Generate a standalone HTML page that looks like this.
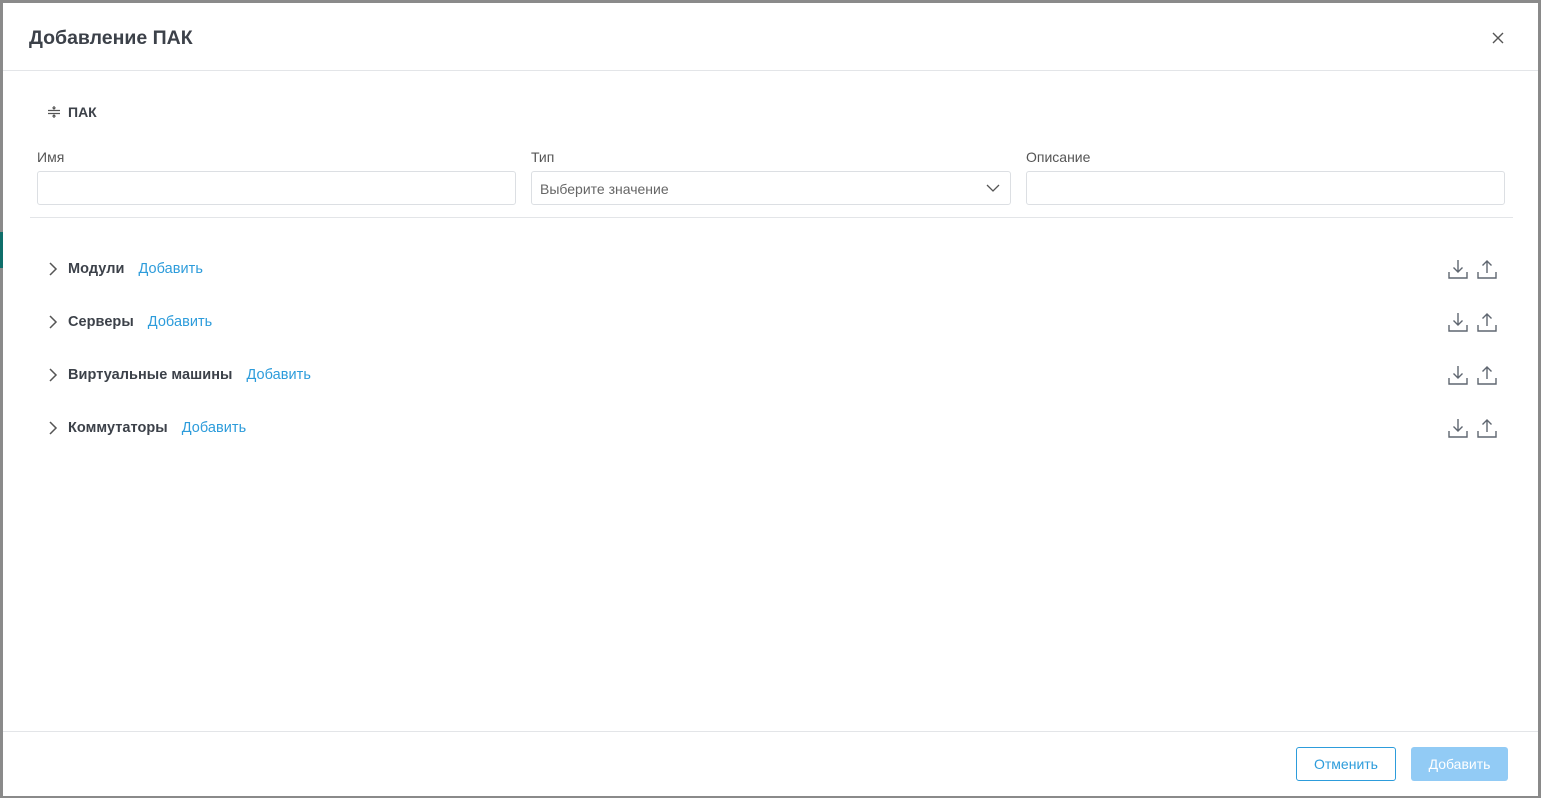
<!DOCTYPE html>
<html><head><meta charset="utf-8">
<style>
*{box-sizing:border-box;margin:0;padding:0}
body{width:1541px;height:798px;background:#8a8a8a;font-family:"Liberation Sans",sans-serif;position:relative;overflow:hidden;color:#3c4149}
.teal{position:absolute;left:0;top:232px;width:4px;height:36px;background:#0f6e6a}
.modal{position:absolute;left:3px;top:3px;width:1535px;height:793px;background:#fff}
.title{position:absolute;left:26px;top:24px;font-size:19.5px;font-weight:bold;color:#3c4149}
.close{position:absolute;left:1488px;top:28px}
.hr{position:absolute;height:1px;background:#e3e5e8}
.sec{position:absolute;left:43px;top:101px;font-size:14px;font-weight:bold;display:flex;align-items:center;gap:6px}
.lbl{position:absolute;top:146px;font-size:14px;color:#555}
.inp{position:absolute;top:168px;height:34px;border:1px solid #dcdfe3;border-radius:3px;font-size:14px;color:#666;padding:9px 8px}
.row{position:absolute;left:45px;display:flex;align-items:center;font-size:14.5px;letter-spacing:0.05px}
.row b{margin-left:10px;color:#3c4149}
.row a{color:#2d9cdb;margin-left:14px;text-decoration:none}
.ic{position:absolute;left:1443px}
.btn{position:absolute;top:744px;height:34px;border-radius:3px;font-size:14px;display:flex;align-items:center;justify-content:center}
</style></head><body>
<div class="teal"></div>
<div class="modal">
<div class="title">Добавление ПАК</div>
<svg class="close" width="14" height="14" viewBox="0 0 14 14"><path d="M2 2L12 12M12 2L2 12" stroke="#555" stroke-width="1.4"/></svg>
<div class="hr" style="left:0;top:67px;width:1535px"></div>
<div class="sec"><svg width="16" height="16" viewBox="0 0 16 16"><path d="M2 6.5H14M2 9.5H14M8 2V5M8 11V14M6.5 3.5L8 5L9.5 3.5M6.5 12.5L8 11L9.5 12.5" stroke="#555" stroke-width="1.2" fill="none"/></svg>ПАК</div>
<div class="lbl" style="left:34px">Имя</div>
<div class="lbl" style="left:528px">Тип</div>
<div class="lbl" style="left:1023px">Описание</div>
<div class="inp" style="left:34px;width:479px"></div>
<div class="inp" style="left:528px;width:480px">Выберите значение<svg style="position:absolute;right:10px;top:11px" width="14" height="10" viewBox="0 0 14 10"><path d="M1 2L7 8L13 2" stroke="#555" stroke-width="1.3" fill="none"/></svg></div>
<div class="inp" style="left:1023px;width:479px"></div>
<div class="hr" style="left:27px;top:214px;width:1483px"></div>

<div class="row" style="top:258px"><svg width="10" height="16" viewBox="0 0 10 16"><path d="M2 2L8 8L2 14" stroke="#555" stroke-width="1.5" fill="none"/></svg><b>Модули</b><a>Добавить</a></div>
<div class="row" style="top:311px"><svg width="10" height="16" viewBox="0 0 10 16"><path d="M2 2L8 8L2 14" stroke="#555" stroke-width="1.5" fill="none"/></svg><b>Серверы</b><a>Добавить</a></div>
<div class="row" style="top:364px"><svg width="10" height="16" viewBox="0 0 10 16"><path d="M2 2L8 8L2 14" stroke="#555" stroke-width="1.5" fill="none"/></svg><b>Виртуальные машины</b><a>Добавить</a></div>
<div class="row" style="top:417px"><svg width="10" height="16" viewBox="0 0 10 16"><path d="M2 2L8 8L2 14" stroke="#555" stroke-width="1.5" fill="none"/></svg><b>Коммутаторы</b><a>Добавить</a></div>

<svg class="ic" style="top:255px" width="58" height="24" viewBox="0 0 58 24"><g stroke="#5f6670" stroke-width="1.4" fill="none"><path d="M12 2V14M7.5 9.5L12 14L16.5 9.5M3 14V20H21V14"/><path d="M41 15V3M36.5 7.5L41 3L45.5 7.5M32 14V20H50V14"/></g></svg>
<svg class="ic" style="top:308px" width="58" height="24" viewBox="0 0 58 24"><g stroke="#5f6670" stroke-width="1.4" fill="none"><path d="M12 2V14M7.5 9.5L12 14L16.5 9.5M3 14V20H21V14"/><path d="M41 15V3M36.5 7.5L41 3L45.5 7.5M32 14V20H50V14"/></g></svg>
<svg class="ic" style="top:361px" width="58" height="24" viewBox="0 0 58 24"><g stroke="#5f6670" stroke-width="1.4" fill="none"><path d="M12 2V14M7.5 9.5L12 14L16.5 9.5M3 14V20H21V14"/><path d="M41 15V3M36.5 7.5L41 3L45.5 7.5M32 14V20H50V14"/></g></svg>
<svg class="ic" style="top:414px" width="58" height="24" viewBox="0 0 58 24"><g stroke="#5f6670" stroke-width="1.4" fill="none"><path d="M12 2V14M7.5 9.5L12 14L16.5 9.5M3 14V20H21V14"/><path d="M41 15V3M36.5 7.5L41 3L45.5 7.5M32 14V20H50V14"/></g></svg>

<div class="hr" style="left:0;top:728px;width:1535px"></div>
<div class="btn" style="left:1293px;width:100px;border:1px solid #2d9cdb;color:#2d9cdb">Отменить</div>
<div class="btn" style="left:1408px;width:97px;background:#92cbf5;color:#fff">Добавить</div>
</div>
</body></html>
